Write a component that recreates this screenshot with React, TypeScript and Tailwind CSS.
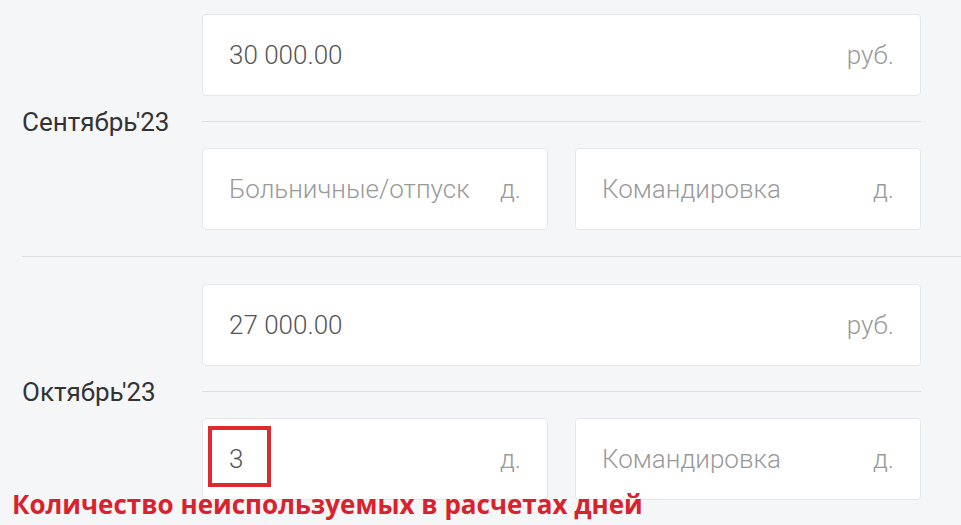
import React from "react";

function Box({ value, placeholder, unit }: { value?: string; placeholder?: string; unit: string }) {
  return (
    <div className="h-[82px] bg-white border border-[#e4e6e9] rounded-[4px] flex items-center justify-between px-[26px]">
      {value ? (
        <span className="text-[26px] font-light text-[#555]">{value}</span>
      ) : (
        <span className="text-[26px] font-light text-[#9a9a9a]">{placeholder}</span>
      )}
      <span className="text-[26px] font-light text-[#9a9a9a]">{unit}</span>
    </div>
  );
}

function Group({ label, amount, sick, pt }: { label: string; amount: string; sick?: string; pt: string }) {
  return (
    <div className={`flex ${pt} pb-[26px]`}>
      <div className="w-[202px] pl-[22px] flex items-center">
        <span className="text-[26px] text-[#333]">{label}</span>
      </div>
      <div className="w-[719px] flex flex-col">
        <Box value={amount} unit="руб." />
        <div className="mt-[25px] h-px bg-[#dcdee1]" />
        <div className="mt-[26px] grid grid-cols-2 gap-[27px]">
          <Box value={sick} placeholder="Больничные/отпуск" unit="д." />
          <Box placeholder="Командировка" unit="д." />
        </div>
      </div>
    </div>
  );
}

export default function App() {
  return (
    <div className="relative w-[961px] h-[525px] overflow-hidden bg-[#f5f6f8] font-['Roboto',sans-serif]">
      <Group label="Сентябрь'23" amount="30 000.00" pt="pt-[14px]" />
      <div className="ml-[22px] h-px bg-[#dcdee1]" />
      <Group label="Октябрь'23" amount="27 000.00" sick="3" pt="pt-[27px]" />
      <div className="absolute left-[208px] top-[426px] w-[63px] h-[61px] border-4 border-[#dc2a2f]" />
      <div className="absolute left-[12px] top-[491px] leading-[26px] text-[26px] font-bold text-[#d9222b] font-['Open_Sans',sans-serif] whitespace-nowrap">
        Количество неиспользуемых в расчетах дней
      </div>
    </div>
  );
}
